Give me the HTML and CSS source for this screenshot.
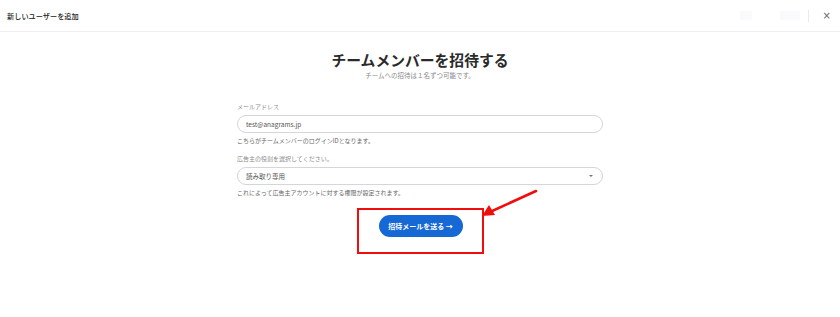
FILE: index.html
```html
<!DOCTYPE html>
<html lang="ja">
<head>
    <meta charset="UTF-8">
    <title>新しいユーザーを追加</title>
    <link rel="stylesheet" href="styles.css">
</head>
<body>
    <div class="modal-header">
        <div class="modal-title">新しいユーザーを追加</div>
        <div class="header-tools">
            <span class="ghost ghost-a"></span>
            <span class="ghost ghost-b"></span>
            <span class="divider"></span>
            <button class="close-button">×</button>
        </div>
    </div>

    <div class="modal-body">
        <h1 class="invite-title">チームメンバーを招待する</h1>
        <p class="invite-sub">チームへの招待は１名ずつ可能です。</p>

        <div class="form">
            <div class="field">
                <label class="field-label">メールアドレス</label>
                <div class="text-input">test@anagrams.jp</div>
                <div class="field-help">こちらがチームメンバーのログインIDとなります。</div>
            </div>
            <div class="field">
                <label class="field-label">広告主の役割を選択してください。</label>
                <div class="text-input select-input">
                    <span>読み取り専用</span>
                    <span class="caret"></span>
                </div>
                <div class="field-help">これによって広告主アカウントに対する権限が設定されます。</div>
            </div>
        </div>

        <div class="submit-row">
            <div class="highlight-box">
                <button class="send-button">招待メールを送る →</button>
            </div>
        </div>
    </div>

    <!-- 注釈の矢印 -->
    <svg class="callout-arrow" width="60" height="30" viewBox="0 0 60 30">
        <line x1="56" y1="2" x2="10" y2="23" stroke="#f20d0d" stroke-width="2.6" stroke-linecap="round"/>
        <polygon points="2,27 9,16 15,26" fill="#f20d0d"/>
    </svg>
</body>
</html>
```

FILE: styles.css
```css
body {
    margin: 0;
    padding: 0;
    background: #FFFFFF;
    font-family: "Noto Sans CJK JP", "Noto Sans", sans-serif;
    color: #222222;
    width: 840px;
    height: 317px;
    overflow: hidden;
    position: relative;
}

.modal-header {
    height: 32px;
    border-bottom: 1px solid #eeeff5;
    display: flex;
    align-items: center;
    justify-content: space-between;
    padding: 0 9px 0 7px;
    box-sizing: border-box;
}

.modal-title {
    font-size: 7.2px;
    font-weight: 500;
    color: #222;
}

.header-tools {
    display: flex;
    align-items: center;
    gap: 8px;
}

.ghost {
    display: block;
    height: 9px;
    background: #fafafc;
}

.ghost-a {
    width: 12px;
    margin-right: 20px;
}

.ghost-b {
    width: 20px;
}

.divider {
    width: 1px;
    height: 12px;
    background: #e8e8ee;
    margin-right: 6px;
}

.close-button {
    border: none;
    background: none;
    padding: 0;
    font-size: 10px;
    line-height: 1;
    color: #666;
    font-family: "DejaVu Sans", sans-serif;
}

.modal-body {
    display: flex;
    flex-direction: column;
    align-items: center;
}

.invite-title {
    margin: 16px 0 0 0;
    font-size: 14.8px;
    font-weight: 700;
    color: #2a2a2a;
    line-height: 23px;
}

.invite-sub {
    margin: 0;
    font-size: 6.5px;
    color: #8a8a8a;
    line-height: 9px;
}

.form {
    width: 366px;
    margin-top: 22px;
    display: flex;
    flex-direction: column;
    gap: 9px;
}

.field-label {
    display: block;
    font-size: 6px;
    color: #8a8a8a;
    line-height: 10px;
    margin-bottom: 3px;
}

.text-input {
    height: 18px;
    border: 1px solid #d5d5db;
    border-radius: 9px;
    box-sizing: border-box;
    padding: 0 8px;
    font-size: 6.5px;
    color: #555;
    display: flex;
    align-items: center;
}

.select-input {
    justify-content: space-between;
}

.caret {
    width: 0;
    height: 0;
    border-left: 2.5px solid transparent;
    border-right: 2.5px solid transparent;
    border-top: 2.5px solid #777;
    margin-right: 1px;
}

.field-help {
    font-size: 6px;
    color: #666;
    line-height: 9px;
    margin-top: 3px;
}

.submit-row {
    margin-top: 11px;
    display: flex;
    justify-content: center;
}

.highlight-box {
    width: 127px;
    height: 46px;
    border: 2px solid #f20d0d;
    box-sizing: border-box;
    display: flex;
    align-items: flex-start;
    justify-content: center;
    padding-top: 5px;
    margin-left: 1px;
}

.send-button {
    background: #1668d4;
    color: #FFFFFF;
    border: none;
    border-radius: 11px;
    height: 22px;
    width: 84px;
    font-family: "Noto Sans CJK JP", sans-serif;
    font-size: 7px;
    font-weight: 700;
    padding: 0;
}

.callout-arrow {
    position: absolute;
    left: 480px;
    top: 189px;
}
```
